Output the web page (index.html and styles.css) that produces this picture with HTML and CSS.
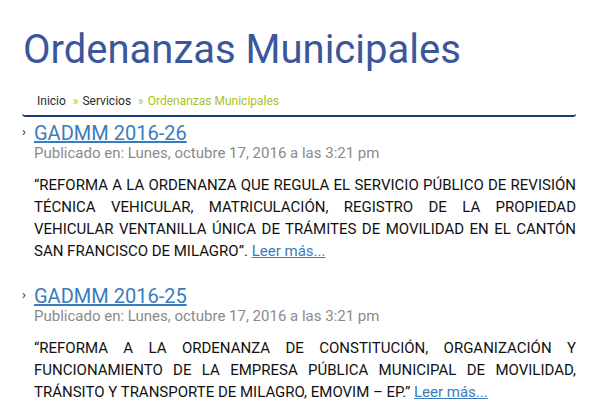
FILE: index.html
```html
<!DOCTYPE html>
<html lang="es">
<head>
<meta charset="utf-8">
<link rel="stylesheet" href="styles.css">
</head>
<body>
<div class="page">
  <h1 class="title">Ordenanzas Municipales</h1>
  <nav class="crumbs">
    <span class="crumb">Inicio</span>
    <span class="sep">»</span>
    <span class="crumb">Servicios</span>
    <span class="sep">»</span>
    <span class="crumb current">Ordenanzas Municipales</span>
  </nav>
  <ul class="posts">
    <li class="post">
      <h2 class="post-title"><a href="#">GADMM 2016-26</a></h2>
      <div class="meta">Publicado en: Lunes, octubre 17, 2016 a las 3:21 pm</div>
      <p class="excerpt">“REFORMA A LA ORDENANZA QUE REGULA EL SERVICIO PÚBLICO DE REVISIÓN TÉCNICA VEHICULAR, MATRICULACIÓN, REGISTRO DE LA PROPIEDAD VEHICULAR VENTANILLA ÚNICA DE TRÁMITES DE MOVILIDAD EN EL CANTÓN SAN FRANCISCO DE MILAGRO”. <a href="#">Leer más...</a></p>
    </li>
    <li class="post">
      <h2 class="post-title"><a href="#">GADMM 2016-25</a></h2>
      <div class="meta">Publicado en: Lunes, octubre 17, 2016 a las 3:21 pm</div>
      <p class="excerpt">“REFORMA A LA ORDENANZA DE CONSTITUCIÓN, ORGANIZACIÓN Y FUNCIONAMIENTO DE LA EMPRESA PÚBLICA MUNICIPAL DE MOVILIDAD, TRÁNSITO Y TRANSPORTE DE MILAGRO, EMOVIM – EP.” <a href="#">Leer más...</a></p>
    </li>
  </ul>
</div>
</body>
</html>
```

FILE: styles.css
```css
html, body {
  margin: 0;
  padding: 0;
  background: #ffffff;
}
body {
  font-family: Roboto, "Liberation Sans", sans-serif;
}
.page {
  padding: 26px 18px 0 22px;
}
.title {
  margin: 0 0 0 1px;
  font-size: 40px;
  font-weight: 400;
  line-height: 48px;
  color: #3b579c;
}
.crumbs {
  margin-top: 19px;
  padding: 0 0 6px 15px;
  border-bottom: 2px solid #1c3a7e;
  border-bottom-left-radius: 4px;
  border-bottom-right-radius: 3px;
  font-size: 12px;
  line-height: 16px;
  color: #2b2b2b;
}
.sep {
  color: #b5c722;
  margin: 0 1px 0 4px;
}
.current {
  color: #a8c21c;
}
.posts {
  list-style: none;
  margin: 5px 0 0 0;
  padding: 0;
}
.post {
  position: relative;
  padding-left: 12px;
  margin-bottom: 23px;
}
.post::before {
  content: "›";
  position: absolute;
  left: 0;
  top: 2px;
  font-size: 13px;
  color: #222;
}
.post-title {
  margin: 0;
  font-size: 20px;
  font-weight: 400;
  line-height: 22px;
}
.post-title a {
  color: #3a7cc0;
  text-decoration: underline;
}
.meta {
  font-size: 15px;
  line-height: 18px;
  color: #8a8a8a;
}
.excerpt {
  margin: 12px 0 0 0;
  font-size: 15px;
  line-height: 22px;
  color: #111;
  text-align: justify;
}
.excerpt a {
  color: #3a7cc0;
  text-decoration: underline;
}
```
